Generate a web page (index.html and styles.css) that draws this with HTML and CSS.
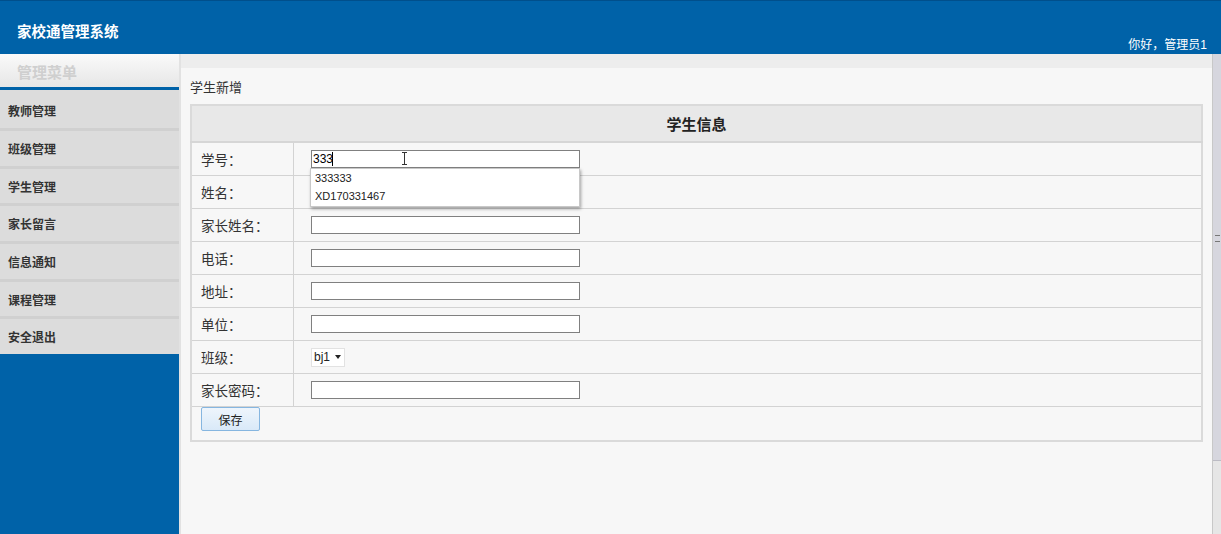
FILE: index.html
```html
<!DOCTYPE html>
<html lang="zh-CN">
<head>
  <meta charset="UTF-8">
  <title>家校通管理系统</title>
  <link rel="stylesheet" href="styles.css">
</head>
<body>
  <div class="header">
    <div class="logo">家校通管理系统</div>
    <div class="welcome">你好，管理员1</div>
  </div>
  <div class="wrap">
    <div class="sidebar">
      <div class="menu-title">管理菜单</div>
      <ul class="menu">
        <li>教师管理</li>
        <li>班级管理</li>
        <li>学生管理</li>
        <li>家长留言</li>
        <li>信息通知</li>
        <li>课程管理</li>
        <li>安全退出</li>
      </ul>
    </div>
    <div class="main">
      <div class="topband"></div>
      <div class="content">
        <div class="crumb">学生新增</div>
        <table class="form-table">
          <tr><th colspan="2">学生信息</th></tr>
          <tr>
            <td class="label">学号：</td>
            <td class="field">
              <div class="ac-wrap">
                <input class="txt" type="text" value="333">
                <span class="caret"></span>
                <span class="ibeam"></span>
                <div class="ac-list">
                  <div class="ac-item">333333</div>
                  <div class="ac-item">XD170331467</div>
                </div>
              </div>
            </td>
          </tr>
          <tr><td class="label">姓名：</td><td class="field"><input class="txt" type="text"></td></tr>
          <tr><td class="label">家长姓名：</td><td class="field"><input class="txt" type="text"></td></tr>
          <tr><td class="label">电话：</td><td class="field"><input class="txt" type="text"></td></tr>
          <tr><td class="label">地址：</td><td class="field"><input class="txt" type="text"></td></tr>
          <tr><td class="label">单位：</td><td class="field"><input class="txt" type="text"></td></tr>
          <tr>
            <td class="label">班级：</td>
            <td class="field"><span class="select">bj1 <i class="arrow"></i></span></td>
          </tr>
          <tr><td class="label">家长密码：</td><td class="field"><input class="txt" type="password"></td></tr>
          <tr><td colspan="2" class="btn-cell"><button class="btn">保存</button></td></tr>
        </table>
      </div>
    </div>
    <div class="scrollbar">
      <div class="thumb"><span class="grip"></span></div>
      <div class="down"></div>
    </div>
  </div>
</body>
</html>
```

FILE: styles.css
```css
body {
  margin: 0;
  width: 1221px;
  height: 534px;
  overflow: hidden;
  font-family: "Liberation Sans", "Noto Sans CJK SC", sans-serif;
  font-size: 12px;
  color: #333;
  background-color: #0062a8;
}

.header {
  height: 54px;
  background-color: #0062a8;
  border-top: 1px solid #004f8c;
  box-sizing: border-box;
  display: flex;
  justify-content: space-between;
  color: #fff;
}

.logo {
  font-size: 14.5px;
  font-weight: bold;
  padding: 19px 0 0 17px;
}

.welcome {
  font-size: 12px;
  padding: 34px 14px 0 0;
}

.wrap {
  display: flex;
  height: 480px;
}

.sidebar {
  width: 179px;
  flex: none;
  background-color: #0062a8;
}

.menu-title {
  height: 33px;
  line-height: 37px;
  padding-left: 17px;
  font-size: 15px;
  font-weight: bold;
  color: #cfcfcf;
  background: linear-gradient(#fafafa, #f2f2f2 40%, #e6e6e6);
  border-bottom: 3px solid #0062a8;
}

.menu {
  list-style: none;
  margin: 0;
  padding: 0;
}

.menu li {
  height: 34.7px;
  line-height: 38px;
  padding-left: 8px;
  font-weight: bold;
  font-size: 12px;
  color: #333;
  background-color: #dcdcdc;
  border-top: 3px solid #d0d0d0;
}

.menu li:first-child {
  border-top: 0;
  height: 38px;
  line-height: 44px;
}

.main {
  flex: 1;
  background-color: #f7f7f7;
  border-left: 2px solid #e2e2e2;
}

.topband {
  height: 14px;
  background-color: #ededed;
}

.content {
  padding: 12px 9px 0 9px;
}

.crumb {
  font-size: 13px;
  height: 24px;
  line-height: 16px;
}

.form-table {
  width: 100%;
  border-collapse: collapse;
  border: 2px solid #dadada;
  background-color: #f7f7f7;
}

.form-table th {
  height: 35px;
  padding: 0;
  background-color: #e8e8e8;
  font-family: "Noto Sans CJK SC", sans-serif;
  font-size: 15px;
  font-weight: bold;
  color: #222;
  border-bottom: 2px solid #d6d6d6;
}

.form-table td {
  height: 32px;
  padding: 0;
  border-bottom: 1px solid #d3d3d3;
}

.label {
  width: 92px;
  padding-left: 9px !important;
  font-family: "Noto Sans CJK SC", sans-serif;
  font-size: 13.5px;
  border-right: 1px solid #d3d3d3;
}

.field {
  padding-left: 17px !important;
}

.txt {
  display: block;
  width: 269px;
  height: 18px;
  box-sizing: border-box;
  border: 1px solid #808080;
  background-color: #fff;
  padding: 0 1px;
  font-family: "Liberation Sans", sans-serif;
  font-size: 12px;
  color: #000;
  margin: 0;
}

.ac-wrap {
  position: relative;
  width: 269px;
}

.caret {
  position: absolute;
  left: 21px;
  top: 2px;
  width: 1px;
  height: 14px;
  background-color: #000;
}

.ibeam {
  position: absolute;
  left: 93px;
  top: 2px;
  width: 1px;
  height: 13px;
  background-color: #333;
}

.ibeam::before,
.ibeam::after {
  content: "";
  position: absolute;
  left: -2px;
  width: 5px;
  height: 1px;
  background-color: #333;
}

.ibeam::before { top: 0; }
.ibeam::after { bottom: 0; }

.ac-list {
  position: absolute;
  left: -1px;
  top: 18px;
  width: 268px;
  height: 37px;
  background-color: #fff;
  border: 1px solid #c8c8c8;
  box-shadow: 1px 2px 3px rgba(0, 0, 0, 0.35);
  z-index: 2;
}

.ac-item {
  height: 18px;
  line-height: 18px;
  padding-left: 4px;
  font-size: 11px;
  color: #222;
}

.select {
  display: inline-flex;
  align-items: center;
  height: 17px;
  padding: 0 3px 0 2px;
  background-color: #fff;
  border: 1px solid #e2e2e2;
  font-size: 12px;
  color: #222;
}

.arrow {
  display: inline-block;
  margin-left: 5px;
  border-left: 3px solid transparent;
  border-right: 3px solid transparent;
  border-top: 4px solid #222;
}

.form-table td.btn-cell {
  height: 33px;
  vertical-align: top;
  padding-left: 9px;
  border-bottom: 0;
}

.btn {
  width: 59px;
  height: 24px;
  margin-top: 0;
  border: 1px solid #86b6e0;
  border-radius: 2px;
  background: linear-gradient(#eef5fc, #d9e9f8);
  font-family: "Noto Sans CJK SC", sans-serif;
  font-size: 12px;
  color: #222;
  padding: 0;
}

.scrollbar {
  width: 8px;
  flex: none;
  background-color: #e6e6e6;
  border-left: 1px solid #c8c8c8;
  display: flex;
  flex-direction: column;
}

.thumb {
  height: 406px;
  background-color: #d6d6de;
  border-bottom: 1px solid #bcbcc4;
  position: relative;
}

.grip {
  position: absolute;
  left: 2px;
  top: 181px;
  width: 5px;
  height: 5px;
  border-top: 1px solid #777;
  border-bottom: 1px solid #777;
}

.down {
  margin-top: auto;
  height: 6px;
  background-color: #e6e6e6;
}
```
